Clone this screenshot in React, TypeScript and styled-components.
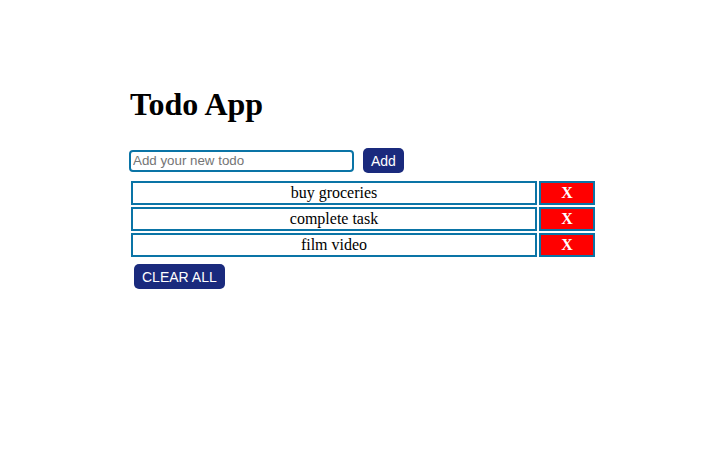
import React, { useState } from "react";
import styled, { createGlobalStyle } from "styled-components";

const GlobalStyle = createGlobalStyle`
  html, body { margin: 0; padding: 0; background: #ffffff; }
  body { font-family: "Liberation Serif", "Times New Roman", serif; color: #000; }
`;

const Page = styled.div`
  padding: 86px 0 0 129px;
`;

const Title = styled.h1`
  margin: 0;
  font-family: "Liberation Serif", "Times New Roman", serif;
  font-size: 32px;
  font-weight: bold;
  line-height: 37px;
  padding-left: 1px;
`;

const FormRow = styled.form`
  display: flex;
  align-items: center;
  gap: 9px;
  margin-top: 25px;
  height: 25px;
`;

const Input = styled.input`
  box-sizing: border-box;
  width: 225px;
  height: 22px;
  border: 2px solid #0a74a6;
  border-radius: 4px;
  padding: 1px 2px;
  font-family: "Liberation Sans", Arial, sans-serif;
  font-size: 13.333px;
  outline: none;
  &::placeholder { color: #757575; }
`;

const NavyButton = styled.button<{ $padX: number }>`
  box-sizing: border-box;
  height: 25px;
  padding: 0 ${(p) => p.$padX}px;
  border: none;
  border-radius: 5px;
  background: #1a2a7d;
  color: #ffffff;
  font-family: "Liberation Sans", Arial, sans-serif;
  font-size: 14px;
  cursor: pointer;
`;

const List = styled.div`
  display: grid;
  grid-template-columns: 406px 56px;
  grid-auto-rows: 24px;
  gap: 2px;
  margin: 8px 0 0 2px;
`;

const Cell = styled.div`
  box-sizing: border-box;
  border: 2px solid #0a74a6;
  display: flex;
  align-items: center;
  justify-content: center;
  font-size: 16px;
`;

const DeleteCell = styled.button`
  box-sizing: border-box;
  border: 2px solid #0a74a6;
  background: #ff0000;
  color: #ffffff;
  font-family: "Liberation Serif", "Times New Roman", serif;
  font-size: 16px;
  font-weight: bold;
  padding: 0;
  cursor: pointer;
`;

const ClearRow = styled.div`
  margin: 7px 0 0 5px;
`;

export default function App() {
  const [todos, setTodos] = useState(["buy groceries", "complete task", "film video"]);
  const [text, setText] = useState("");
  return (
    <Page>
      <GlobalStyle />
      <Title>Todo App</Title>
      <FormRow
        onSubmit={(e) => {
          e.preventDefault();
          if (text.trim()) {
            setTodos([...todos, text.trim()]);
            setText("");
          }
        }}
      >
        <Input placeholder="Add your new todo" value={text} onChange={(e) => setText(e.target.value)} />
        <NavyButton $padX={8} type="submit">Add</NavyButton>
      </FormRow>
      <List>
        {todos.map((t, i) => (
          <React.Fragment key={i}>
            <Cell>{t}</Cell>
            <DeleteCell onClick={() => setTodos(todos.filter((_, j) => j !== i))}>X</DeleteCell>
          </React.Fragment>
        ))}
      </List>
      <ClearRow>
        <NavyButton $padX={8} onClick={() => setTodos([])}>CLEAR ALL</NavyButton>
      </ClearRow>
    </Page>
  );
}
